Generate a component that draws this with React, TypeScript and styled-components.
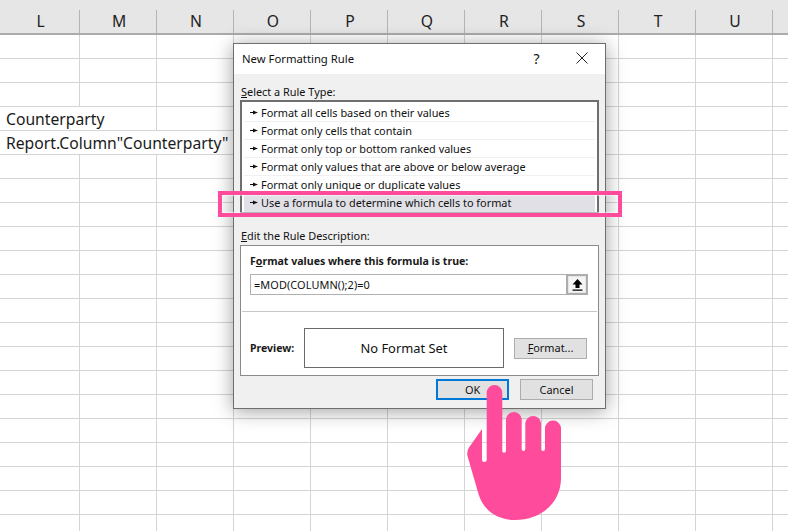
import React from 'react';
import styled, { createGlobalStyle } from 'styled-components';

const uiFont = `"Noto Sans", "Open Sans", "Liberation Sans", sans-serif`;
const pink = '#ff4b9b';

const COLUMNS = ['L', 'M', 'N', 'O', 'P', 'Q', 'R', 'S', 'T', 'U', ''];
const ROW_COUNT = 21;

const rules = [
  'Format all cells based on their values',
  'Format only cells that contain',
  'Format only top or bottom ranked values',
  'Format only values that are above or below average',
  'Format only unique or duplicate values',
  'Use a formula to determine which cells to format',
];

const GlobalStyle = createGlobalStyle`
  html, body {
    margin: 0;
    padding: 0;
    background: #fff;
    overflow: hidden;
  }
`;

const Page = styled.div`
  position: relative;
  width: 788px;
  height: 531px;
  overflow: hidden;
  font-family: ${uiFont};
  color: #111;
`;

const Sheet = styled.div`
  display: grid;
  grid-template-columns: 80px repeat(10, 77px);
  grid-template-rows: 35px;
  grid-auto-rows: 24px;
`;

const HeaderRow = styled.div`
  grid-column: 1 / -1;
  display: grid;
  grid-template-columns: 80px repeat(10, 77px);
  height: 35px;
  box-sizing: border-box;
  padding-top: 10px;
  background: #e6e6e6;
  border-bottom: 2px solid #ababab;
`;

const HeaderCell = styled.div`
  display: flex;
  align-items: center;
  justify-content: center;
  box-sizing: border-box;
  padding-left: 2px;
  font-size: 15.7px;
  line-height: 1;
  color: #222;
  border-right: 1px solid #b4b4b4;
`;

const Cell = styled.div<{ $span?: number }>`
  grid-column: span ${({ $span }) => $span ?? 1};
  box-sizing: border-box;
  padding: 1px 0 0 6px;
  font-size: 15.7px;
  line-height: 22px;
  white-space: nowrap;
  color: #1a1a1a;
  border-right: 1px solid #d4d4d4;
  border-bottom: 1px solid #d4d4d4;
`;

const Dialog = styled.div`
  position: absolute;
  left: 233px;
  top: 43px;
  width: 373px;
  height: 366px;
  box-sizing: border-box;
  display: flex;
  flex-direction: column;
  background: #f0f0f0;
  border: 1px solid #6e6e6e;
  box-shadow: 0 2px 18px rgba(0, 0, 0, 0.38);
  font-size: 10.9px;
`;

const TitleBar = styled.div`
  display: flex;
  align-items: center;
  height: 30px;
  flex: none;
  box-sizing: border-box;
  padding: 0 0 2px 8px;
  background: #fff;
`;

const Title = styled.div`
  flex: 1;
  font-size: 11.3px;
`;

const HelpMark = styled.div`
  width: 45px;
  font-size: 14px;
  text-align: center;
`;

const CloseButton = styled.div`
  display: flex;
  width: 45px;
  margin-right: 1px;
  justify-content: center;
  color: #222;
`;

const DialogBody = styled.div`
  display: flex;
  flex-direction: column;
  padding: 9px 6px 0;
`;

const SectionLabel = styled.div`
  padding-left: 1px;
  height: 17px;
  line-height: 17px;
  white-space: nowrap;
`;

const RuleList = styled.div`
  box-sizing: border-box;
  width: 359px;
  height: 114px;
  padding: 2px;
  background: #fff;
  border: 2px solid #6f6f6f;
  display: flex;
  flex-direction: column;
`;

const RuleRow = styled.div<{ $selected?: boolean }>`
  display: flex;
  align-items: center;
  gap: 3px;
  height: 18px;
  flex: none;
  box-sizing: border-box;
  padding-left: 6px;
  white-space: nowrap;
  background: ${({ $selected }) => ($selected ? '#e0e0e6' : '#fff')};
  border-bottom: 1px solid ${({ $selected }) => ($selected ? '#e0e0e6' : '#f0f0f0')};
`;

const DescriptionLabel = styled(SectionLabel)`
  margin-top: 13px;
  height: 18px;
`;

const DescriptionBox = styled.div`
  box-sizing: border-box;
  width: 359px;
  height: 131px;
  background: #fff;
  border: 1px solid #8a8a8a;
  display: flex;
  flex-direction: column;
`;

const FormulaSection = styled.div`
  box-sizing: border-box;
  height: 66px;
  padding: 7px 8px 0;
  border-bottom: 1px solid #c6c6c6;
  margin: 0 1px;
`;

const BoldLabel = styled.div`
  font-size: 10.6px;
  font-weight: 700;
  height: 21px;
  line-height: 17px;
  white-space: nowrap;
  color: #1a1a1a;
`;

const FormulaRow = styled.div`
  display: flex;
  width: 338px;
  height: 21px;
  box-sizing: border-box;
  border: 1px solid #b0b0b0;
`;

const FormulaInput = styled.div`
  flex: 1;
  padding-left: 3px;
  line-height: 19px;
  letter-spacing: 0.1px;
`;

const UploadButton = styled.div`
  display: flex;
  align-items: center;
  justify-content: center;
  box-sizing: border-box;
  width: 22px;
  margin: -1px;
  background: #f5f5f5;
  border: 3px solid #adadad;
  outline: 1px solid #e6e6e6;
  outline-offset: -3px;
`;

const PreviewSection = styled.div`
  display: flex;
  align-items: center;
  padding: 16px 0 0 9px;
`;

const PreviewLabel = styled(BoldLabel)`
  font-size: 10.5px;
  width: 54px;
  height: 17px;
`;

const PreviewBox = styled.div`
  box-sizing: border-box;
  display: flex;
  align-items: center;
  justify-content: center;
  width: 200px;
  height: 40px;
  border: 1px solid #6a6a6a;
  font-size: 12.9px;
`;

const DialogButton = styled.div<{ $primary?: boolean }>`
  display: flex;
  align-items: center;
  justify-content: center;
  box-sizing: border-box;
  width: 73px;
  height: 21px;
  padding-bottom: 1px;
  background: #e1e1e1;
  border: ${({ $primary }) => ($primary ? '2px solid #0078d7' : '1px solid #adadad')};
`;

const FormatButton = styled(DialogButton)`
  margin-left: 10px;
`;

const ButtonRow = styled.div`
  display: flex;
  justify-content: flex-end;
  gap: 11px;
  padding: 3px 6px 0 0;
`;

const Highlight = styled.div`
  position: absolute;
  left: 218px;
  top: 191px;
  width: 404px;
  height: 26px;
  box-sizing: border-box;
  border: 4px solid ${pink};
  outline: 1px solid rgba(255, 255, 255, 0.5);
  outline-offset: -5px;
`;

const HandIcon = styled.svg`
  position: absolute;
  left: 460px;
  top: 380px;
  display: block;
`;

const Marker = () => (
  <svg width="8" height="5" viewBox="0 0 8 5" style={{ flex: 'none' }}>
    <path d="M0 2h3V.5L8 2.5 3 4.5V3H0z" fill="#111" />
  </svg>
);

const Hand = () => (
  <HandIcon width="110" height="145" viewBox="460 380 110 145">
    <path
      fill={pink}
      d="M482 429 V460 Q482.2 462 484 462 Q486.7 462 486.7 460 V392.7 A7.8 7.8 0 0 1 502.3 392.7 V451 Q502.3 452.8 504 452.8 Q506 452.8 506 451 V419 A7.9 7.9 0 0 1 521.7 419 V449 Q521.7 451 523.5 451 Q525.3 451 525.3 449 V423 A7.9 7.9 0 0 1 541 423 V449 Q541 451 543 451 Q545 451 545 449 V428.6 A8 8 0 0 1 561 428.6 V478 C561 503 541 520 515 520 C497 520 483 510 478.5 494 L467.5 456 Q466.5 451 469 447.5 Z"
    />
  </HandIcon>
);

const App: React.FC = () => {
  const cells = [];
  for (let row = 0; row < ROW_COUNT; row++) {
    if (row === 3) {
      cells.push(<Cell key="a" $span={2}>Counterparty</Cell>);
      for (let c = 2; c < COLUMNS.length; c++) cells.push(<Cell key={`a${c}`} />);
    } else if (row === 4) {
      cells.push(<Cell key="b" $span={3}>Report.Column"Counterparty"</Cell>);
      for (let c = 3; c < COLUMNS.length; c++) cells.push(<Cell key={`b${c}`} />);
    } else {
      for (let c = 0; c < COLUMNS.length; c++) cells.push(<Cell key={`${row}-${c}`} />);
    }
  }

  return (
    <Page>
      <GlobalStyle />
      <Sheet>
        <HeaderRow>
          {COLUMNS.map((name) => (
            <HeaderCell key={name}>{name}</HeaderCell>
          ))}
        </HeaderRow>
        {cells}
      </Sheet>

      <Dialog>
        <TitleBar>
          <Title>New Formatting Rule</Title>
          <HelpMark>?</HelpMark>
          <CloseButton>
            <svg width="12" height="12" viewBox="0 0 12 12">
              <path d="M.5.5l11 11M11.5.5l-11 11" stroke="currentColor" strokeWidth="1" fill="none" />
            </svg>
          </CloseButton>
        </TitleBar>
        <DialogBody>
          <SectionLabel><u>S</u>elect a Rule Type:</SectionLabel>
          <RuleList>
            {rules.map((rule, i) => (
              <RuleRow key={rule} $selected={i === rules.length - 1}>
                <Marker />
                {rule}
              </RuleRow>
            ))}
          </RuleList>
          <DescriptionLabel><u>E</u>dit the Rule Description:</DescriptionLabel>
          <DescriptionBox>
            <FormulaSection>
              <BoldLabel>F<u>o</u>rmat values where this formula is true:</BoldLabel>
              <FormulaRow>
                <FormulaInput>=MOD(COLUMN();2)=0</FormulaInput>
                <UploadButton>
                  <svg width="11" height="12" viewBox="0 0 11 12">
                    <path d="M5.5 0L10.5 5.5H7.5V9H3.5V5.5H.5z M.5 10.5h10v1.2H.5z" fill="#000" />
                  </svg>
                </UploadButton>
              </FormulaRow>
            </FormulaSection>
            <PreviewSection>
              <PreviewLabel>Preview:</PreviewLabel>
              <PreviewBox>No Format Set</PreviewBox>
              <FormatButton><span><u>F</u>ormat...</span></FormatButton>
            </PreviewSection>
          </DescriptionBox>
          <ButtonRow>
            <DialogButton $primary>OK</DialogButton>
            <DialogButton>Cancel</DialogButton>
          </ButtonRow>
        </DialogBody>
      </Dialog>

      <Highlight />
      <Hand />
    </Page>
  );
};

export default App;
